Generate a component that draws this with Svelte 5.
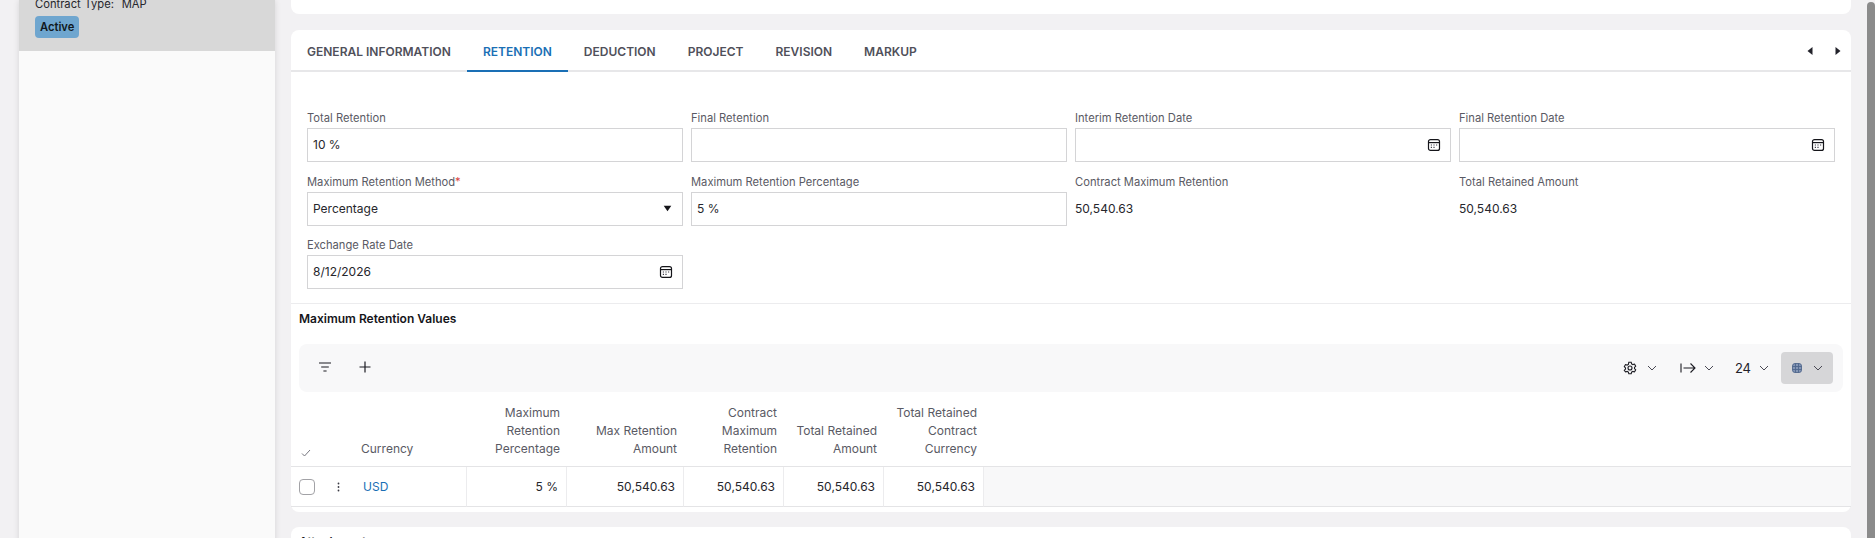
<script>
  const tabs = ['General Information', 'Retention', 'Deduction', 'Project', 'Revision', 'Markup'];
  const heads = [
    ['Maximum', 'Retention', 'Percentage'],
    ['Max Retention', 'Amount'],
    ['Contract', 'Maximum', 'Retention'],
    ['Total Retained', 'Amount'],
    ['Total Retained', 'Contract', 'Currency']
  ];
  const values = ['5 %', '50,540.63', '50,540.63', '50,540.63', '50,540.63'];
</script>

{#snippet calendar()}
  <svg class="cal" width="14" height="14" viewBox="0 0 14 14" fill="none" stroke="#15151a" stroke-width="1.2">
    <rect x="1.5" y="1.6" width="11" height="10.8" rx="2" />
    <path d="M1.5 4.6h11" />
    <path d="M3.8 7h1.2M6.4 7h1.2M9 7h1.2M3.8 9.4h1.2M6.4 9.4h1.2" stroke-width="1.2" stroke="#3d3d48" />
  </svg>
{/snippet}

{#snippet chevron()}
  <svg class="chev" width="10" height="6" viewBox="0 0 10 6" fill="none" stroke="#4a4a55" stroke-width="1">
    <path d="M1 1l4 4 4-4" />
  </svg>
{/snippet}

<div class="page">
  <aside class="side">
    <div class="side-head">
      <div class="ctype">Contract Type:&nbsp;&nbsp;MAP</div>
      <span class="badge">Active</span>
    </div>
  </aside>

  <main class="content">
    <div class="card-top"></div>

    <section class="card">
      <div class="tabs">
        {#each tabs as t, i}
          <div class="tab" class:active={i === 1}>{t}</div>
        {/each}
        <div class="tab-nav">
          <svg width="8" height="10" viewBox="0 0 8 10"><path d="M6.5 1v8L1.5 5z" fill="#22222a" /></svg>
          <svg width="8" height="10" viewBox="0 0 8 10"><path d="M1.5 1v8l5-4z" fill="#22222a" /></svg>
        </div>
      </div>

      <div class="form">
        <div class="field"><label>Total Retention</label><div class="input">10 %</div></div>
        <div class="field"><label>Final Retention</label><div class="input"></div></div>
        <div class="field"><label>Interim Retention Date</label><div class="input end">{@render calendar()}</div></div>
        <div class="field"><label>Final Retention Date</label><div class="input end">{@render calendar()}</div></div>

        <div class="field">
          <label>Maximum Retention Method<span class="req">*</span></label>
          <div class="input">Percentage
            <svg class="caret" width="9" height="7" viewBox="0 0 9 7"><path d="M.7 .8h7.6L4.5 6.2z" fill="#15151a" /></svg>
          </div>
        </div>
        <div class="field"><label>Maximum Retention Percentage</label><div class="input">5 %</div></div>
        <div class="field"><label>Contract Maximum Retention</label><div class="plain">50,540.63</div></div>
        <div class="field"><label>Total Retained Amount</label><div class="plain">50,540.63</div></div>

        <div class="field last"><label>Exchange Rate Date</label><div class="input">8/12/2026{@render calendar()}</div></div>
      </div>

      <h3 class="sec-title">Maximum Retention Values</h3>

      <div class="toolbar">
        <div class="tool-left">
          <svg width="14" height="12" viewBox="0 0 14 12" fill="none" stroke="#1b1b22" stroke-width="1.2">
            <path d="M1 2h12M3.2 6h7.6M5.4 10h3.2" />
          </svg>
          <svg class="tool-plus" width="14" height="14" viewBox="0 0 14 14" fill="none" stroke="#1b1b22" stroke-width="1.2">
            <path d="M7 1.5v11M1.5 7h11" />
          </svg>
        </div>
        <div class="tool-right">
          <div class="tbtn gear">
            <svg width="14" height="14" viewBox="0 0 14 14" fill="none" stroke="#1b1b22" stroke-width="1.1">
              <path d="M5.8 1.2h2.4l.4 1.7 1.3.7 1.6-.5 1.2 2.1-1.2 1.2v1.2l1.2 1.2-1.2 2.1-1.6-.5-1.3.7-.4 1.7H5.8l-.4-1.7-1.3-.7-1.6.5L1.3 9.3l1.2-1.2V6.9L1.3 5.7l1.2-2.1 1.6.5 1.3-.7z" />
              <circle cx="7" cy="7" r="2" />
            </svg>
            {@render chevron()}
          </div>
          <div class="tbtn arrow">
            <svg width="16" height="12" viewBox="0 0 16 12" fill="none" stroke="#1b1b22" stroke-width="1.1">
              <path d="M1 1.5v9M3.5 6H15M10.5 1.5L15 6l-4.5 4.5" />
            </svg>
            {@render chevron()}
          </div>
          <div class="tbtn num">24 {@render chevron()}</div>
          <div class="tbtn on">
            <svg width="10" height="10" viewBox="0 0 10 10" fill="#8496b5" stroke="#4f668c" stroke-width=".9">
              <rect x=".5" y=".5" width="9" height="9" rx="2.5" />
              <path d="M.5 3.5h9M.5 6.5h9M3.5 .5v9M6.5 .5v9" fill="none" />
            </svg>
            {@render chevron()}
          </div>
        </div>
      </div>

      <div class="grid">
        <div class="th first">
          <svg class="tick" width="10" height="8" viewBox="0 0 10 8" fill="none" stroke="#77777f" stroke-width="1"><path d="M1 4.5l2.5 2.5L9 1" /></svg>
          <span class="cur">Currency</span>
        </div>
        {#each heads as h}
          <div class="th">{#each h as line}<span>{line}</span>{/each}</div>
        {/each}
        <div class="th filler-head"></div>

        <div class="td first">
          <span class="check"></span>
          <svg class="kebab" width="3" height="10" viewBox="0 0 3 10" fill="#3b3b44"><circle cx="1.5" cy="1.5" r=".9" /><circle cx="1.5" cy="5" r=".9" /><circle cx="1.5" cy="8.5" r=".9" /></svg>
          <span class="usd">USD</span>
        </div>
        {#each values as v}
          <div class="td num-cell">{v}</div>
        {/each}
        <div class="td filler"></div>
      </div>
    </section>

    <section class="card-next"><span>Attachments</span></section>
  </main>

  <div class="scroll"><div class="thumb"></div></div>
</div>

<style>
  :global(body) {
    margin: 0;
    background: #f2f1f3;
    font-family: Inter, 'Noto Sans', sans-serif;
    color: #1d1d24;
  }

  .page {
    display: grid;
    grid-template-columns: 275px 16px 1560px 16px 8px;
    width: 1875px;
    height: 538px;
    overflow: hidden;
    background: #f2f1f3;
  }

  .side {
    margin-left: 19px;
    background: #fafafa;
    box-shadow: 0 0 6px rgba(0, 0, 0, 0.12);
  }

  .side-head {
    height: 54px;
    padding-left: 16px;
    background: #d8d8d8;
    font-size: 11.2px;
  }

  .ctype {
    height: 16px;
    margin-top: -3px;
    line-height: 14px;
    word-spacing: 0.7px;
    color: #26262c;
  }

  .badge {
    display: inline-block;
    height: 22px;
    margin-top: 3px;
    padding: 0 5px;
    line-height: 22px;
    border-radius: 4px;
    background: #6fa6cf;
    font-weight: 600;
    color: #101820;
  }

  .content {
    grid-column: 3;
    min-width: 0;
  }

  .card-top {
    height: 14px;
    background: #fff;
    border-radius: 0 0 8px 8px;
  }

  .card {
    margin-top: 16px;
    height: 482px;
    background: #fff;
    border-radius: 8px;
  }

  .tabs {
    display: flex;
    align-items: stretch;
    height: 40px;
    border-bottom: 2px solid #e7e7e9;
  }

  .tab {
    padding: 0 16px;
    line-height: 44px;
    height: 42px;
    font-size: 12px;
    font-weight: 600;
    text-transform: uppercase;
    color: #50505a;
    box-sizing: border-box;
  }

  .tab.active {
    color: #1a6fb5;
    border-bottom: 2px solid #1a6fb5;
  }

  .tab-nav {
    display: flex;
    align-items: center;
    gap: 20px;
    margin-left: auto;
    padding: 1px 9px 0 0;
  }

  .form {
    display: grid;
    grid-template-columns: repeat(4, 376px);
    column-gap: 8px;
    row-gap: 12px;
    padding: 38px 16px 14px;
    border-bottom: 1px solid #ececee;
  }

  .field.last {
    margin-top: -1px;
  }

  label {
    display: block;
    height: 18px;
    font-size: 11.2px;
    line-height: 17px;
    color: #5a5a64;
  }

  .req {
    color: #d9433f;
  }

  .input {
    display: flex;
    align-items: center;
    justify-content: space-between;
    box-sizing: border-box;
    height: 34px;
    padding: 0 5px 1px;
    border: 1px solid #d4d4d6;
    font-size: 12px;
    color: #26262c;
  }

  .input.end {
    justify-content: flex-end;
  }

  .cal {
    margin-right: 4px;
  }

  .caret {
    margin-right: 5px;
  }

  .plain {
    height: 34px;
    line-height: 34px;
    font-size: 12px;
    color: #26262c;
  }

  .sec-title {
    margin: 0;
    padding: 7px 8px 0;
    height: 33px;
    box-sizing: border-box;
    font-size: 12px;
    line-height: 16px;
    font-weight: 600;
    color: #15151a;
  }

  .toolbar {
    display: flex;
    align-items: center;
    height: 48px;
    margin: 7px 8px 0;
    padding: 0 10px 0 19px;
    border-radius: 8px;
    background: #f8f8f9;
  }

  .tool-left {
    display: flex;
    align-items: center;
    margin-bottom: 2px;
  }

  .tool-plus {
    margin-left: 26px;
  }

  .tool-right {
    display: flex;
    align-items: center;
    margin-left: auto;
  }

  .tbtn {
    display: flex;
    align-items: center;
    height: 32px;
    font-size: 13px;
    color: #22222a;
  }

  .tbtn.gear {
    gap: 10px;
  }

  .tbtn.arrow {
    gap: 8px;
    margin-left: 23px;
  }

  .tbtn.num {
    gap: 8px;
    margin-left: 21px;
    margin-right: 12px;
  }

  .tbtn.on {
    width: 52px;
    box-sizing: border-box;
    padding-left: 11px;
    gap: 11px;
    border-radius: 4px;
    background: #d6d6d8;
  }

  .grid {
    display: grid;
    grid-template-columns: 176px 100px 117px 100px 100px 100px 1fr;
    margin-top: 6px;
  }

  .th {
    display: flex;
    flex-direction: column;
    justify-content: flex-end;
    align-items: flex-end;
    box-sizing: border-box;
    height: 69px;
    padding: 0 7px 8px 0;
    border-bottom: 1px solid #e4e4e6;
    font-size: 12px;
    line-height: 18px;
    color: #5a5a64;
  }

  .th.first {
    flex-direction: row;
    justify-content: flex-start;
    align-items: flex-end;
    padding-left: 10px;
  }

  .tick {
    margin-bottom: 1px;
  }

  .cur {
    margin-left: 50px;
  }

  .td {
    display: flex;
    align-items: center;
    box-sizing: border-box;
    height: 40px;
    border-bottom: 1px solid #e4e4e6;
    border-right: 1px solid #ececee;
    font-size: 12px;
    color: #26262c;
  }

  .td.first {
    padding-left: 8px;
  }

  .check {
    box-sizing: border-box;
    width: 16px;
    height: 16px;
    border: 1px solid #a2a2a6;
    border-radius: 4px;
    background: #fff;
  }

  .kebab {
    margin-left: 22px;
  }

  .usd {
    margin-left: 23px;
    color: #1a6fb5;
  }

  .num-cell {
    justify-content: flex-end;
    padding-right: 8px;
  }

  .filler {
    background: #f8f8f9;
    border-right: 0;
  }

  .card-next {
    margin-top: 15px;
    height: 40px;
    padding: 7px 8px 0;
    box-sizing: border-box;
    background: #fff;
    border-radius: 8px 8px 0 0;
    font-size: 12px;
    font-weight: 600;
    line-height: 16px;
  }

  .scroll {
    grid-column: 5;
  }

  .thumb {
    height: 100%;
    margin-top: 2px;
    border-radius: 4px 4px 0 0;
    background: #8b8b8b;
  }
</style>
